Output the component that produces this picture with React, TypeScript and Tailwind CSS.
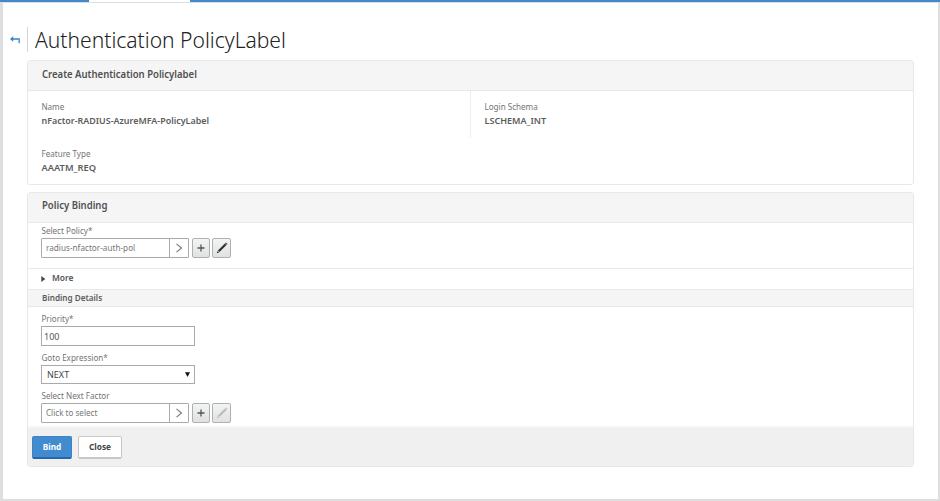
import type { ReactNode } from "react";

function Label({ children, className = "" }: { children: ReactNode; className?: string }) {
  return <div className={`h-3 origin-left scale-x-[.88] whitespace-nowrap pl-[.5px] text-[9.2px] leading-3 text-[#747474] ${className}`}>{children}</div>;
}

function Value({ children, className = "scale-x-[.93]" }: { children: ReactNode; className?: string }) {
  return <div className={`mt-[2px] h-3 origin-left whitespace-nowrap pl-[.5px] text-[9.6px] font-semibold leading-3 text-[#5c5c5c] ${className}`}>{children}</div>;
}

function PanelTitle({ children, leading }: { children: ReactNode; leading: string }) {
  return (
    <h2 className={`h-[30px] border-b border-[#e8e8e8] bg-[#f5f5f5] pl-[13.5px] text-[10.6px] font-semibold text-[#505050] ${leading}`}>
      <span className="block origin-left scale-x-[.9]">{children}</span>
    </h2>
  );
}

function SquareButton({ children, label, className = "w-[18px]" }: { children: ReactNode; label: string; className?: string }) {
  return (
    <button aria-label={label} className={`flex h-5 items-center justify-center rounded-[2px] border border-[#b0b0b0] bg-linear-to-b from-[#f3f4f4] to-[#dfe1e2] ${className}`}>
      {children}
    </button>
  );
}

function Picker({ text, textClass, pencil }: { text: string; textClass: string; pencil: string }) {
  return (
    <div className="flex">
      <div className="flex h-5 w-[148px] rounded-[1px] border border-[#aaa] bg-white">
        <div className="w-[127px] pl-[3.5px]">
          <div className={`origin-left whitespace-nowrap text-[9.2px] leading-[18px] text-[#777] ${textClass}`}>{text}</div>
        </div>
        <button aria-label="Choose" className="flex flex-1 items-center justify-center border-l border-[#aaa]">
          <svg width="8" height="10" viewBox="0 0 8 10" fill="none" stroke="#777" strokeWidth="1.1">
            <path d="M1.5 .8 6.5 5 1.5 9.2" />
          </svg>
        </button>
      </div>
      <div className="ml-[3px] flex gap-[2px]">
        <SquareButton label="Add">
          <svg width="8" height="8" viewBox="0 0 8 8" stroke="#555" strokeWidth="1.3">
            <path d="M4 .5v7M.5 4h7" />
          </svg>
        </SquareButton>
        <SquareButton label="Edit" className="w-[19px]">
          <svg width="12" height="12" viewBox="0 0 12 12" fill={pencil}>
            <path d="M.8 11.2 1.6 8.9 3.1 10.4ZM1.9 8.5 8.9 1.5 10.5 3.1 3.5 10.1ZM9.2 1.2 9.9.5 11.5 2.1 10.8 2.8Z" />
          </svg>
        </SquareButton>
      </div>
    </div>
  );
}

export default function App() {
  return (
    <div className="h-[501px] w-[940px] overflow-hidden bg-[#dedede] font-['Noto_Sans','Open_Sans',sans-serif]">
      <div className="flex h-[2px] bg-[#4488c9]">
        <div className="ml-[89px] w-[101px] bg-white" />
      </div>
      <main className="ml-[3px] h-[497px] w-[935px] border-t border-[#dcdfe2] bg-white">
        <header className="flex h-[57px] pt-[24px]">
          <svg className="ml-[7px] mt-[8px]" width="10" height="10" viewBox="0 0 10 10" fill="none" stroke="#3484cb" strokeWidth="1.3">
            <path d="M2 4h7.2v4.2" />
            <path d="M3.2 1.2 0 4l3.2 2.8Z" fill="#3484cb" stroke="none" />
          </svg>
          <h1 className="ml-[7px] h-[25px] whitespace-nowrap border-l border-[#d5d5d5] pl-[6.5px] text-[22px] font-light leading-6 text-[#222]">
            <span className="block origin-left scale-x-[.957]">Authentication PolicyLabel</span>
          </h1>
        </header>

        <section className="ml-6 h-[125px] w-[887px] overflow-hidden rounded-[3px] border border-[#e8e8e8]">
          <PanelTitle leading="leading-[26px]">Create Authentication Policylabel</PanelTitle>
          <div className="flex h-[47px]">
            <div className="w-[443px] border-r border-[#eee] pl-[13px] pt-[10px]">
              <Label>Name</Label>
              <Value>nFactor-RADIUS-AzureMFA-PolicyLabel</Value>
            </div>
            <div className="pl-[13px] pt-[10px]">
              <Label>Login Schema</Label>
              <Value className="scale-x-[.945]">LSCHEMA_INT</Value>
            </div>
          </div>
          <div className="pl-[13px] pt-[10px]">
            <Label>Feature Type</Label>
            <Value className="scale-x-[.97]">AAATM_REQ</Value>
          </div>
        </section>

        <section className="ml-6 mt-[7px] h-[275px] w-[887px] overflow-hidden rounded-[3px] border border-[#e8e8e8]">
          <PanelTitle leading="leading-[25px]">Policy Binding</PanelTitle>
          <div className="h-[45px] pl-[13px] pt-[2px]">
            <Label>Select Policy*</Label>
            <div className="mt-[1px]"><Picker text="radius-nfactor-auth-pol" textClass="scale-x-[.89]" pencil="#333" /></div>
          </div>
          <div className="flex h-[21px] items-center border-t border-[#e8e8e8] pb-[1px] pl-[13px] text-[9.4px] font-semibold text-[#555]">
            <svg width="5" height="6" viewBox="0 0 5 6" fill="#444"><path d="M.3 0 4.3 3 .3 6Z" /></svg>
            <span className="ml-[6px] origin-left scale-x-[.9]">More</span>
          </div>
          <h3 className="h-[18px] border-y border-[#e8e8e8] bg-[#f5f5f5] pl-[13.5px] text-[9.4px] font-semibold leading-4 text-[#5c5c5c]">
            <span className="block origin-left scale-x-[.87]">Binding Details</span>
          </h3>
          <div className="h-[119px] pl-[13px] pt-[6px]">
            <Label>Priority*</Label>
            <input aria-label="Priority" defaultValue="100" className="mt-[1px] block h-5 w-[154px] border border-[#aaa] px-[2px] text-[9px] text-[#555]" />
            <Label className="mt-[6px]">Goto Expression*</Label>
            <div className="mt-[1px] flex h-[19px] w-[154px] items-center justify-between border border-[#aaa] pl-[5px] pr-[4px] text-[9.2px] text-[#444]">
              <span className="origin-left scale-x-[.98]">NEXT</span>
              <svg width="5" height="5" viewBox="0 0 5 5" fill="#111"><path d="M0 .2h5L2.5 5Z" /></svg>
            </div>
            <Label className="mt-[6px]">Select Next Factor</Label>
            <div className="mt-[1px]"><Picker text="Click to select" textClass="scale-x-[.88]" pencil="#bbb" /></div>
          </div>
          <footer className="flex h-[40px] gap-[6px] border-t-2 border-[#f5f5f5] bg-[#f0f0f0] pl-1 pt-[8px]">
            <button className="h-[23px] w-10 rounded-[2px] border border-b-2 border-[#3e84c6] border-b-[#2268ae] bg-[#428bcf] text-[9.4px] font-bold text-white">
              <span className="block scale-x-[.88]">Bind</span>
            </button>
            <button className="h-[23px] w-[44px] rounded-[2px] border border-b-2 border-[#c8c8c8] bg-white text-[9.4px] font-bold text-[#444]">
              <span className="block scale-x-[.88]">Close</span>
            </button>
          </footer>
        </section>
      </main>
    </div>
  );
}
